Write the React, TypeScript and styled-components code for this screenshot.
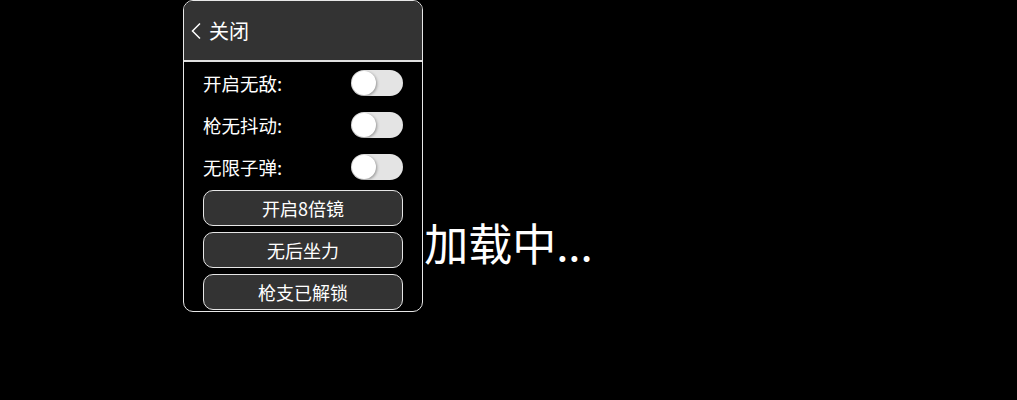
import React, { useState } from "react";
import styled, { createGlobalStyle } from "styled-components";

const Global = createGlobalStyle`
  html, body { margin: 0; padding: 0; background: #000; }
  body { font-family: "Noto Sans CJK SC", "Noto Sans", sans-serif; color: #fff; }
`;

const Page = styled.div`
  position: relative;
  width: 1017px;
  height: 400px;
  background: #000;
  overflow: hidden;
  display: flex;
  justify-content: center;
  padding-top: 211px;
  box-sizing: border-box;
`;

const Loading = styled.div`
  font-size: 44px;
  line-height: 62px;
  height: 62px;
  color: #fff;
  white-space: nowrap;
`;

const Panel = styled.div`
  position: absolute;
  left: 183px;
  top: 0;
  width: 240px;
  height: 312px;
  box-sizing: border-box;
  border: 1px solid #e8e8e8;
  border-radius: 10px;
  background: #000;
  overflow: hidden;
  display: flex;
  flex-direction: column;
`;

const Header = styled.div`
  height: 59px;
  flex: none;
  background: #333;
  border-bottom: 2px solid #e0e0e0;
  display: flex;
  align-items: center;
  padding-left: 6px;
  gap: 7px;
  font-size: 20px;
  color: #fff;
`;

const Body = styled.div`
  display: flex;
  flex-direction: column;
  padding: 0 19px;
`;

const Row = styled.div`
  height: 42px;
  display: flex;
  align-items: center;
  justify-content: space-between;
  font-size: 18.5px;
`;

const Track = styled.button<{ $on: boolean }>`
  width: 52px;
  height: 26px;
  border-radius: 13px;
  border: none;
  padding: 0;
  background: ${(p) => (p.$on ? "#4cd964" : "#e4e4e4")};
  position: relative;
  cursor: pointer;
`;

const Knob = styled.span<{ $on: boolean }>`
  position: absolute;
  top: 1px;
  left: ${(p) => (p.$on ? "27px" : "1px")};
  width: 24px;
  height: 24px;
  border-radius: 50%;
  background: #fff;
  box-shadow: 1px 1px 3px rgba(0, 0, 0, 0.35);
`;

const Buttons = styled.div`
  display: flex;
  flex-direction: column;
  gap: 6px;
  margin-top: 2px;
`;

const ActionButton = styled.button`
  height: 36px;
  box-sizing: border-box;
  border: 1.5px solid #e6e6e6;
  border-radius: 10px;
  background: #333;
  color: #fff;
  font-family: "Noto Sans CJK SC", "Noto Sans", sans-serif;
  font-size: 18px;
  padding: 0;
  cursor: pointer;
`;

const toggles = ["开启无敌:", "枪无抖动:", "无限子弹:"];
const actions = ["开启8倍镜", "无后坐力", "枪支已解锁"];

export default function App() {
  const [on, setOn] = useState<boolean[]>([false, false, false]);
  return (
    <>
      <Global />
      <Page>
        <Loading>加载中...</Loading>
        <Panel>
          <Header>
            <svg width="12" height="18" viewBox="0 0 12 18">
              <path d="M10 1.5 L2.5 9 L10 16.5" fill="none" stroke="#fff" strokeWidth="1.5" />
            </svg>
            <span>关闭</span>
          </Header>
          <Body>
            {toggles.map((t, i) => (
              <Row key={t}>
                <span>{t}</span>
                <Track
                  $on={on[i]}
                  onClick={() => setOn(on.map((v, j) => (j === i ? !v : v)))}
                >
                  <Knob $on={on[i]} />
                </Track>
              </Row>
            ))}
            <Buttons>
              {actions.map((a) => (
                <ActionButton key={a}>{a}</ActionButton>
              ))}
            </Buttons>
          </Body>
        </Panel>
      </Page>
    </>
  );
}
